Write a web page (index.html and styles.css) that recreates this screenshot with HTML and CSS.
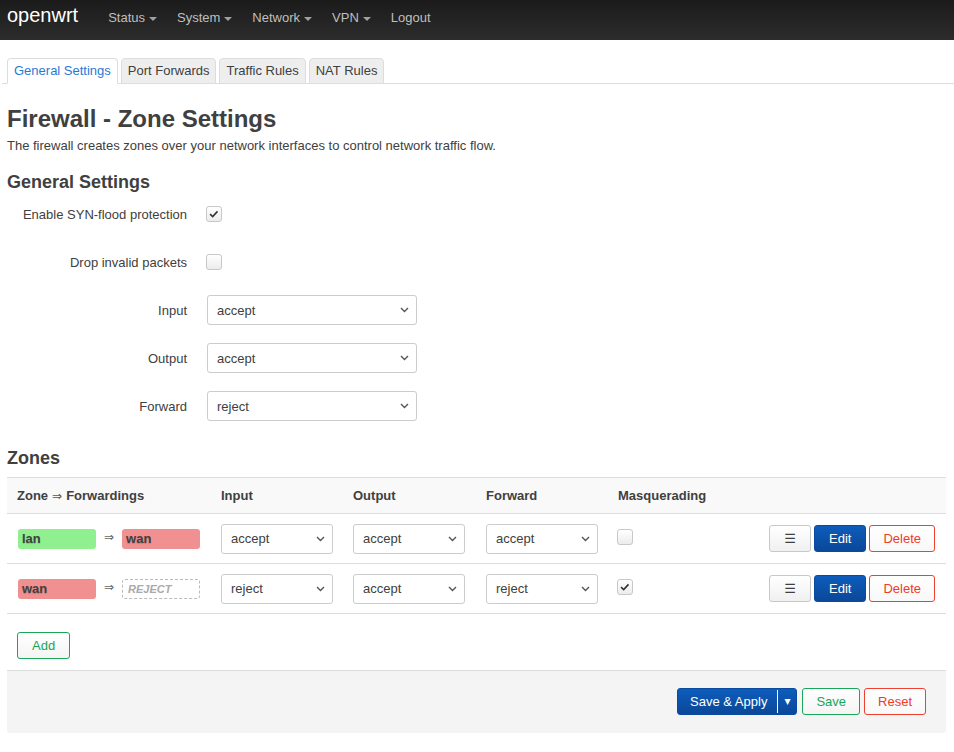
FILE: index.html
```html
<!DOCTYPE html>
<html lang="en">
<head>
<meta charset="utf-8">
<title>Firewall - Zone Settings</title>
<link rel="stylesheet" href="styles.css">
</head>
<body>
<header class="topbar">
  <a class="brand" href="#">openwrt</a>
  <ul class="nav">
    <li><a href="#">Status<span class="caret"></span></a></li>
    <li><a href="#">System<span class="caret"></span></a></li>
    <li><a href="#">Network<span class="caret"></span></a></li>
    <li><a href="#">VPN<span class="caret"></span></a></li>
    <li><a href="#">Logout</a></li>
  </ul>
</header>
<main class="page">
  <ul class="tabs">
    <li class="tab active">General Settings</li>
    <li class="tab">Port Forwards</li>
    <li class="tab">Traffic Rules</li>
    <li class="tab">NAT Rules</li>
  </ul>

  <h2 class="title">Firewall - Zone Settings</h2>
  <p class="desc">The firewall creates zones over your network interfaces to control network traffic flow.</p>

  <h3 class="section">General Settings</h3>
  <div class="form">
    <div class="frow">
      <div class="lbl">Enable SYN-flood protection</div>
      <div class="ctl"><span class="cbox"><svg viewBox="0 0 16 16" width="14" height="14"><path d="M3.5 8.2l3 2.8 5.5-6" fill="none" stroke="#333" stroke-width="1.8"/></svg></span></div>
    </div>
    <div class="frow">
      <div class="lbl">Drop invalid packets</div>
      <div class="ctl"><span class="cbox"></span></div>
    </div>
    <div class="frow">
      <div class="lbl">Input</div>
      <div class="ctl"><div class="sel wide"><span>accept</span><svg viewBox="0 0 9 6" width="9" height="6"><path d="M1 1l3.5 3.5L8 1" fill="none" stroke="#555" stroke-width="1.4"/></svg></div></div>
    </div>
    <div class="frow">
      <div class="lbl">Output</div>
      <div class="ctl"><div class="sel wide"><span>accept</span><svg viewBox="0 0 9 6" width="9" height="6"><path d="M1 1l3.5 3.5L8 1" fill="none" stroke="#555" stroke-width="1.4"/></svg></div></div>
    </div>
    <div class="frow">
      <div class="lbl">Forward</div>
      <div class="ctl"><div class="sel wide"><span>reject</span><svg viewBox="0 0 9 6" width="9" height="6"><path d="M1 1l3.5 3.5L8 1" fill="none" stroke="#555" stroke-width="1.4"/></svg></div></div>
    </div>
  </div>

  <h3 class="section zones-title">Zones</h3>
  <div class="ztable">
    <div class="zrow zhead">
      <div class="c czone">Zone <span class="arr">⇒</span> Forwardings</div>
      <div class="c">Input</div>
      <div class="c">Output</div>
      <div class="c">Forward</div>
      <div class="c cmasq">Masquerading</div>
      <div class="c cact"></div>
    </div>
    <div class="zrow">
      <div class="c czone"><span class="badge lan">lan</span><span class="arr">⇒</span><span class="badge wan">wan</span></div>
      <div class="c"><div class="sel"><span>accept</span><svg viewBox="0 0 9 6" width="9" height="6"><path d="M1 1l3.5 3.5L8 1" fill="none" stroke="#555" stroke-width="1.4"/></svg></div></div>
      <div class="c"><div class="sel"><span>accept</span><svg viewBox="0 0 9 6" width="9" height="6"><path d="M1 1l3.5 3.5L8 1" fill="none" stroke="#555" stroke-width="1.4"/></svg></div></div>
      <div class="c"><div class="sel"><span>accept</span><svg viewBox="0 0 9 6" width="9" height="6"><path d="M1 1l3.5 3.5L8 1" fill="none" stroke="#555" stroke-width="1.4"/></svg></div></div>
      <div class="c cmasq"><span class="cbox"></span></div>
      <div class="c cact"><button class="btn">☰</button><button class="btn btn-edit">Edit</button><button class="btn btn-red">Delete</button></div>
    </div>
    <div class="zrow">
      <div class="c czone"><span class="badge wan">wan</span><span class="arr">⇒</span><span class="badge reject">REJECT</span></div>
      <div class="c"><div class="sel"><span>reject</span><svg viewBox="0 0 9 6" width="9" height="6"><path d="M1 1l3.5 3.5L8 1" fill="none" stroke="#555" stroke-width="1.4"/></svg></div></div>
      <div class="c"><div class="sel"><span>accept</span><svg viewBox="0 0 9 6" width="9" height="6"><path d="M1 1l3.5 3.5L8 1" fill="none" stroke="#555" stroke-width="1.4"/></svg></div></div>
      <div class="c"><div class="sel"><span>reject</span><svg viewBox="0 0 9 6" width="9" height="6"><path d="M1 1l3.5 3.5L8 1" fill="none" stroke="#555" stroke-width="1.4"/></svg></div></div>
      <div class="c cmasq"><span class="cbox"><svg viewBox="0 0 16 16" width="14" height="14"><path d="M3.5 8.2l3 2.8 5.5-6" fill="none" stroke="#333" stroke-width="1.8"/></svg></span></div>
      <div class="c cact"><button class="btn">☰</button><button class="btn btn-edit">Edit</button><button class="btn btn-red">Delete</button></div>
    </div>
  </div>

  <div class="add-wrap"><button class="btn btn-green btn-add">Add</button></div>

  <div class="actions">
    <div class="split"><span class="split-main">Save &amp; Apply</span><span class="split-caret">▾</span></div>
    <button class="btn btn-green">Save</button>
    <button class="btn btn-red">Reset</button>
  </div>
</main>
</body>
</html>
```
FILE: styles.css
```css
* { box-sizing: border-box; }

body {
  margin: 0;
  font-family: "Liberation Sans", Arial, sans-serif;
  font-size: 13px;
  color: #404040;
  background: #fff;
}

/* top bar */
.topbar {
  display: flex;
  align-items: flex-start;
  height: 40px;
  padding-left: 7px;
  background: linear-gradient(#1b1b1b, #2c2c2c);
}
.brand {
  color: #fff;
  font-size: 20px;
  line-height: 30px;
  text-decoration: none;
  margin-right: 20px;
}
.nav {
  display: flex;
  list-style: none;
  margin: 0;
  padding: 0;
}
.nav a {
  display: block;
  padding: 0 10px;
  line-height: 36px;
  color: #bfbfbf;
  text-decoration: none;
}
.caret {
  display: inline-block;
  width: 0;
  height: 0;
  margin-left: 4px;
  vertical-align: middle;
  border-left: 4px solid transparent;
  border-right: 4px solid transparent;
  border-top: 4px solid #a0a0a0;
}

/* page */
.page {
  padding: 0 8px 0 7px;
}

.tabs {
  display: flex;
  list-style: none;
  margin: 18px -8px 0 -5px;
  padding: 0 0 0 5px;
  border-bottom: 1px solid #ddd;
}
.tab {
  margin-right: 3px;
  margin-bottom: -1px;
  padding: 3px 6px;
  line-height: 18px;
  border: 1px solid #ddd;
  border-radius: 4px 4px 0 0;
  background: #eee;
  color: #404040;
}
.tab.active {
  background: #fff;
  border-bottom-color: #fff;
  color: #1f7bd4;
}

.title {
  margin: 20px 0 0;
  font-size: 24px;
  line-height: 29px;
  font-weight: bold;
}
.desc {
  margin: 4px 0 0;
  font-size: 13px;
  line-height: 17px;
}
.section {
  margin: 17px 0 0;
  font-size: 18px;
  line-height: 22px;
  font-weight: bold;
}

/* form */
.form {
  display: flex;
  flex-direction: column;
  gap: 18px;
  margin-top: 6px;
}
.frow {
  display: flex;
  align-items: center;
  height: 30px;
}
.lbl {
  width: 180px;
  text-align: right;
}
.ctl {
  margin-left: 19px;
  display: flex;
  align-items: center;
}

.cbox {
  display: inline-flex;
  align-items: center;
  justify-content: center;
  width: 16px;
  height: 16px;
  border: 1px solid #c8c8c8;
  border-radius: 3px;
  background: linear-gradient(#fff, #ececec);
}

.sel {
  display: flex;
  align-items: center;
  justify-content: space-between;
  width: 112px;
  height: 30px;
  padding: 0 7px 0 9px;
  border: 1px solid #ccc;
  border-radius: 3px;
  background: #fff;
  color: #404040;
}
.sel.wide {
  width: 210px;
  margin-left: 1px;
}

/* zones table */
.zones-title {
  margin-top: 26px;
}
.ztable {
  margin-top: 8px;
}
.zrow {
  display: grid;
  grid-template-columns: 204px 132px 133px 132px 1fr auto;
  align-items: center;
  height: 50px;
  border-bottom: 1px solid #ddd;
}
.zhead {
  height: 37px;
  border-top: 1px solid #ddd;
  background: #f9f9f9;
  font-weight: bold;
}
.c {
  padding-left: 10px;
  display: flex;
  align-items: center;
}
.zrow:not(.zhead) .czone {
  padding-left: 11px;
}
.zrow:not(.zhead) .cmasq {
  padding-left: 9px;
}
.zrow:not(.zhead) .cmasq .cbox {
  margin-bottom: 4px;
}
.cact {
  padding-right: 11px;
  gap: 3px;
  justify-content: flex-end;
}

.arr {
  font-family: "DejaVu Sans", sans-serif;
  font-size: 12px;
  color: #555;
  font-weight: normal;
  margin: 0 4px;
}
.zrow:not(.zhead) .arr {
  margin: 0 8px 3px;
  color: #666;
}
.badge {
  display: inline-block;
  width: 78px;
  height: 20px;
  line-height: 20px;
  padding-left: 4px;
  border-radius: 3px;
  font-weight: bold;
  color: #404040;
  text-shadow: 0 1px 1px rgba(0, 0, 0, 0.15);
}
.badge.lan { background: #90f090; }
.badge.wan { background: #f09090; }
.badge.reject {
  background: #fff;
  border: 1px dashed #bbb;
  line-height: 18px;
  padding-left: 5px;
  font-size: 11px;
  font-style: italic;
  color: #aaa;
  text-shadow: none;
}

/* buttons */
.btn {
  height: 27px;
  padding: 0 13px;
  border: 1px solid #c8c8c8;
  border-radius: 3px;
  background: linear-gradient(#fff, #f0f0f0);
  font-family: "Liberation Sans", Arial, sans-serif;
  font-size: 13px;
  line-height: 25px;
  color: #404040;
  cursor: pointer;
}
.cact .btn:first-child {
  font-family: "DejaVu Sans", sans-serif;
  padding: 0 14px;
}
.btn-edit {
  padding: 0 14px;
  background: linear-gradient(#0d5cbc, #0a4899);
  border-color: #0a4b9e;
  color: #fff;
}
.btn-red {
  border-color: #f0402f;
  color: #f03a28;
  background: linear-gradient(#fff, #f8f8f8);
}
.btn-green {
  border-color: #1aa558;
  color: #18a558;
  background: linear-gradient(#fff, #f4f4f4);
}
.btn-add {
  padding: 0 14px;
}

.add-wrap {
  margin-top: 18px;
  padding-left: 10px;
  display: flex;
}

.actions {
  display: flex;
  justify-content: flex-end;
  align-items: center;
  gap: 4px;
  margin-top: 11px;
  padding: 17px 20px 18px;
  border-top: 1px solid #ddd;
  border-radius: 0 0 3px 3px;
  background: #f4f4f4;
}
.split {
  display: flex;
  height: 27px;
  margin-right: 1px;
  border: 1px solid #0a4b9e;
  border-radius: 3px;
  background: linear-gradient(#0d5cbc, #0a4899);
  color: #fff;
  line-height: 25px;
}
.split-main {
  padding: 0 10px 0 12px;
  border-right: 1px solid #fff;
  margin: 1px 0;
  line-height: 23px;
}
.split-caret {
  width: 18px;
  text-align: center;
  font-family: "DejaVu Sans", sans-serif;
  font-size: 12px;
}
```
